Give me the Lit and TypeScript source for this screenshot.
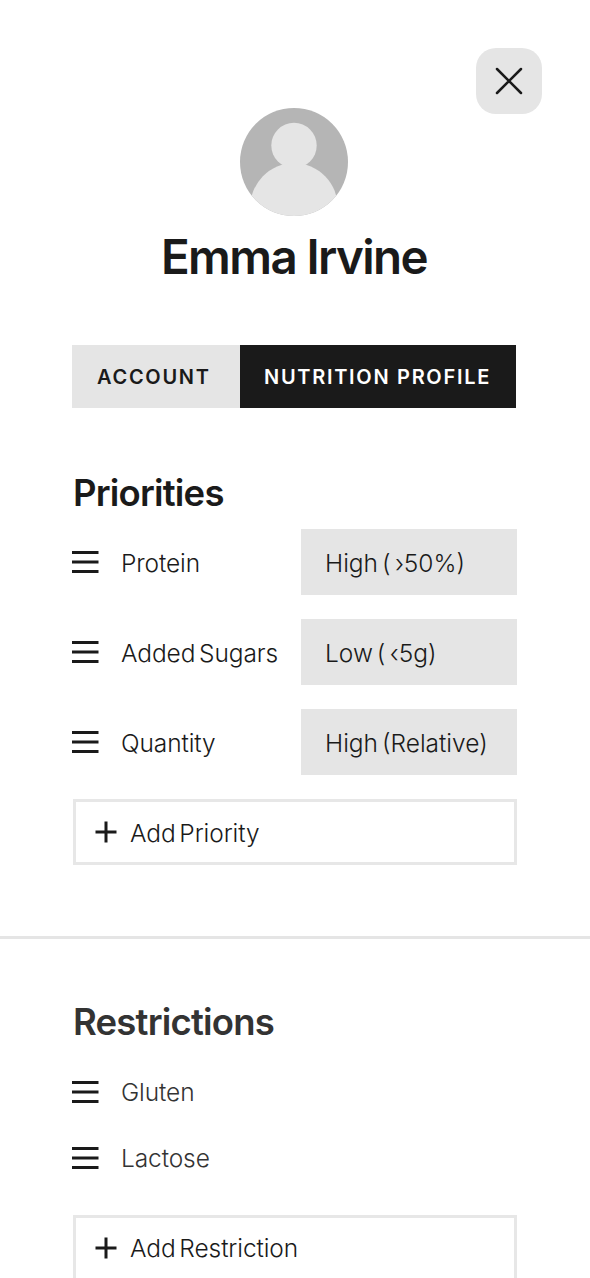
import { LitElement, html, css, svg } from "lit";
import { customElement } from "lit/decorators.js";

const menuIcon = html`<svg class="menu" width="27" height="22" viewBox="0 0 27 22" fill="none" stroke="currentColor" stroke-width="3"><path d="M0 1.500H26.500M0 11H26.500M0 20.500H26.500"/></svg>`;
const plusIcon = html`<svg class="plus" width="22" height="22" viewBox="0 0 22 22" fill="none" stroke="#1a1a1a" stroke-width="3"><path d="M11 0.500V21.500M0.500 11H21.500"/></svg>`;

@customElement("app-root")
export class AppRoot extends LitElement {
  static styles = css`
    :host { display: block; position: relative; width: 590px; height: 1278px; overflow: hidden; background: #fff;
      font-family: Inter, "Noto Sans", sans-serif; color: #1a1a1a; }
    .close { position: absolute; left: 475.500px; top: 47.700px; width: 66px; height: 66px; border-radius: 20px; background: #e5e5e5;
      display: flex; align-items: center; justify-content: center; }
    .top { display: flex; flex-direction: column; align-items: center; padding: 108px 2px 0 0; }
    .avatar { display: block; width: 108px; height: 108px; }
    h1 { margin: 12px 0 0; font-size: 47.500px; line-height: 58px; font-weight: 600; letter-spacing: -1.600px; }
    .tabs { display: flex; margin: 59px 0 0 72px; height: 63px; font-size: 20px; font-weight: 600; letter-spacing: 1.700px; }
    .tab { display: flex; align-items: center; box-sizing: border-box; padding-left: 24px; }
    .tab.off { background: #e5e5e5; width: 168px; padding-left: 25px; }
    .tab.on { background: #1a1a1a; color: #fff; width: 276px; }
    section { padding: 0 73px 0 72px; }
    h2 { margin: 0; padding-left: 1px; font-size: 36.500px; line-height: 44px; font-weight: 600; letter-spacing: -0.800px; }
    .pri { padding-top: 63px; }
    .pri .rows { display: flex; flex-direction: column; gap: 24px; margin-top: 14px; }
    .row { display: flex; align-items: center; height: 66px; font-size: 24.500px; font-weight: 300; word-spacing: -3px; }
    .menu { flex: none; margin-right: 22px; color: #1a1a1a; }
    .name { flex: 1; padding-top: 2px; letter-spacing: -0.100px; }
    .select { flex: none; width: 216px; height: 66px; box-sizing: border-box; margin-left: auto; padding: 2px 0 0 24px; display: flex; align-items: center; background: #e5e5e5; }
    .add { box-sizing: border-box; margin-left: 1px; height: 66px; border: 3px solid #e7e7e7; display: flex; align-items: center; padding-left: 19px; gap: 13px;
      font-size: 24.500px; font-weight: 300; word-spacing: -3px; letter-spacing: -0.100px; flex: none; }
    .add span { padding-top: 2px; }
    .pri .add { margin-top: 24px; }
    .divider { height: 3px; margin-top: 71px; background: #e5e5e5; }
    .res { padding-top: 61px; color: #333; }
    .res .rows { display: flex; flex-direction: column; margin-top: 15px; }
    .res .name { padding-top: 0; }
    .res .add { margin-top: 24px; color: #1a1a1a; }
    .res .add span { padding-top: 0; }
  `;

  render() {
    return html`
      <div class="close">
        <svg width="30" height="30" viewBox="0 0 30 30" fill="none" stroke="#1a1a1a" stroke-width="2.500" stroke-linecap="round"><path d="M3 3L27 27M27 3L3 27"/></svg>
      </div>
      <div class="top">
        <svg class="avatar" viewBox="0 0 108 108">
          <defs><clipPath id="c"><circle cx="54" cy="54" r="54"/></clipPath></defs>
          ${svg`<circle cx="54" cy="54" r="54" fill="#b5b5b5"/>
          <g clip-path="url(#c)" fill="#e5e5e5"><circle cx="54" cy="37.500" r="22.700"/><ellipse cx="54" cy="100" rx="44" ry="45"/></g>`}
        </svg>
        <h1>Emma Irvine</h1>
      </div>
      <div class="tabs">
        <div class="tab off">ACCOUNT</div>
        <div class="tab on">NUTRITION PROFILE</div>
      </div>
      <section class="pri">
        <h2>Priorities</h2>
        <div class="rows">
          ${[["Protein", "High (\u2009›50%)"], ["Added Sugars", "Low (\u2009‹5g)"], ["Quantity", "High (Relative)"]].map(
            ([n, v]) => html`<div class="row">${menuIcon}<span class="name">${n}</span><div class="select">${v}</div></div>`
          )}
        </div>
        <div class="add">${plusIcon}<span>Add Priority</span></div>
      </section>
      <div class="divider"></div>
      <section class="res">
        <h2>Restrictions</h2>
        <div class="rows">
          ${["Gluten", "Lactose"].map((n) => html`<div class="row">${menuIcon}<span class="name">${n}</span></div>`)}
        </div>
        <div class="add">${plusIcon}<span>Add Restriction</span></div>
      </section>
    `;
  }
}
